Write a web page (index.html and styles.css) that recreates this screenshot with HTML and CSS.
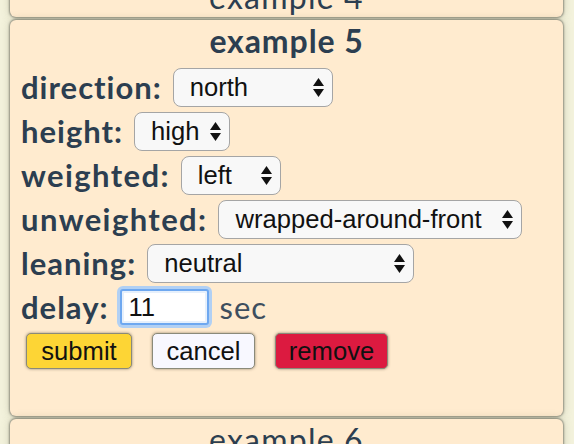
FILE: index.html
```html
<!DOCTYPE html>
<html>
<head>
<meta charset="utf-8">
<link rel="stylesheet" href="styles.css">
</head>
<body>
<div class="page">
  <div class="card">
    <div class="title light">example 4</div>
  </div>
  <div class="card open">
    <div class="title">example 5</div>
    <div class="row first">
      <label class="lbl">direction:</label>
      <span class="sel w-dir"><select><option>north</option></select><svg class="arr" width="11" height="19" viewBox="0 0 11 19"><polygon points="0,8 5.5,0 11,8"/><polygon points="0,11 11,11 5.5,19"/></svg></span>
    </div>
    <div class="row">
      <label class="lbl">height:</label>
      <span class="sel w-hgt"><select><option>high</option></select><svg class="arr" width="11" height="19" viewBox="0 0 11 19"><polygon points="0,8 5.5,0 11,8"/><polygon points="0,11 11,11 5.5,19"/></svg></span>
    </div>
    <div class="row">
      <label class="lbl wide">weighted:</label>
      <span class="sel w-wtd"><select><option>left</option></select><svg class="arr" width="11" height="19" viewBox="0 0 11 19"><polygon points="0,8 5.5,0 11,8"/><polygon points="0,11 11,11 5.5,19"/></svg></span>
    </div>
    <div class="row">
      <label class="lbl wide">unweighted:</label>
      <span class="sel w-unw"><select><option>wrapped-around-front</option></select><svg class="arr" width="11" height="19" viewBox="0 0 11 19"><polygon points="0,8 5.5,0 11,8"/><polygon points="0,11 11,11 5.5,19"/></svg></span>
    </div>
    <div class="row">
      <label class="lbl">leaning:</label>
      <span class="sel w-lean"><select><option>neutral</option></select><svg class="arr" width="11" height="19" viewBox="0 0 11 19"><polygon points="0,8 5.5,0 11,8"/><polygon points="0,11 11,11 5.5,19"/></svg></span>
    </div>
    <div class="row">
      <label class="lbl">delay:</label>
      <input class="delay" type="text" value="11">
      <span class="unit">sec</span>
    </div>
    <div class="btns">
      <button class="btn submit">submit</button>
      <button class="btn cancel">cancel</button>
      <button class="btn remove">remove</button>
    </div>
  </div>
  <div class="card">
    <div class="title light">example 6</div>
  </div>
</div>
</body>
</html>
```

FILE: styles.css
```css
html, body {
  margin: 0;
  padding: 0;
}
body {
  background: #f3f2dc;
  width: 574px;
  height: 444px;
  overflow: hidden;
}
.page {
  margin-top: -24px;
  padding: 0 11px 0 10px;
  display: flex;
  flex-direction: column;
  gap: 3px;
}
.card {
  background: #ffebcf;
  border-radius: 6px;
  box-shadow: 0 0 2px 1px rgba(0,0,0,0.35), 0 0 8px rgba(120,120,90,0.35);
  padding: 0 11px;
  color: #2c3e50;
  font-family: Lato, "Noto Sans", sans-serif;
}
.card.open {
  padding-bottom: 43px;
}
.title {
  height: 41px;
  line-height: 41px;
  text-align: center;
  font-size: 32px;
  letter-spacing: 0.9px;
  font-weight: 700;
  white-space: nowrap;
}
.title.light {
  font-weight: 400;
  letter-spacing: 1.2px;
}
.row {
  height: 44px;
  display: flex;
  align-items: center;
}
.row.first {
  margin-top: 4px;
}
.lbl {
  font-size: 31px;
  letter-spacing: 1px;
  font-weight: 700;
  margin-right: 11px;
  white-space: nowrap;
}
.lbl.wide {
  letter-spacing: 1.4px;
}
.sel {
  position: relative;
  display: inline-block;
  height: 39px;
}
.sel select {
  -webkit-appearance: none;
  appearance: none;
  box-sizing: border-box;
  height: 39px;
  width: 100%;
  border: 1.5px solid #a5a5a5;
  border-radius: 8px;
  background: #f8f8f8;
  padding: 0 0 0 16px;
  font-family: "Liberation Sans", Arial, sans-serif;
  font-size: 25.6px;
  color: #111;
  margin: 0;
}
.sel .arr {
  position: absolute;
  right: 9px;
  top: 10px;
  fill: #111;
  pointer-events: none;
}
.w-dir { width: 160px; }
.w-hgt { width: 96px; }
.w-wtd { width: 100px; }
.w-unw { width: 304px; }
.w-lean { width: 267px; }
.delay {
  box-sizing: border-box;
  width: 89px;
  height: 36px;
  margin: 0 10px 0 1px;
  border: 2px solid #6ea8f0;
  border-radius: 3px;
  box-shadow: 0 0 0 3px #b1d0f4, inset 0 0 0 2px #e6f0fc;
  background: #fff;
  padding: 0 0 0 6px;
  font-family: "Liberation Sans", Arial, sans-serif;
  font-size: 25.6px;
  color: #111;
  outline: none;
}
.unit {
  font-size: 31px;
  letter-spacing: 1px;
  font-weight: 400;
  color: #3e4e5e;
}
.btns {
  height: 44px;
  display: flex;
  align-items: center;
  gap: 20px;
  padding-left: 5px;
}
.btn {
  height: 36px;
  padding: 0;
  text-align: center;
  border: 1px solid #8a8a7a;
  border-radius: 5px;
  box-shadow: 0 0 3px rgba(60,50,30,0.55);
  font-family: "Liberation Sans", Arial, sans-serif;
  font-size: 25.6px;
  color: #111;
  line-height: 34px;
  margin: 0;
}
.submit { background: #fdd535; width: 106px; }
.cancel { background: #f8f8ff; width: 103px; }
.remove { background: #dc1a40; width: 113px; }
```
